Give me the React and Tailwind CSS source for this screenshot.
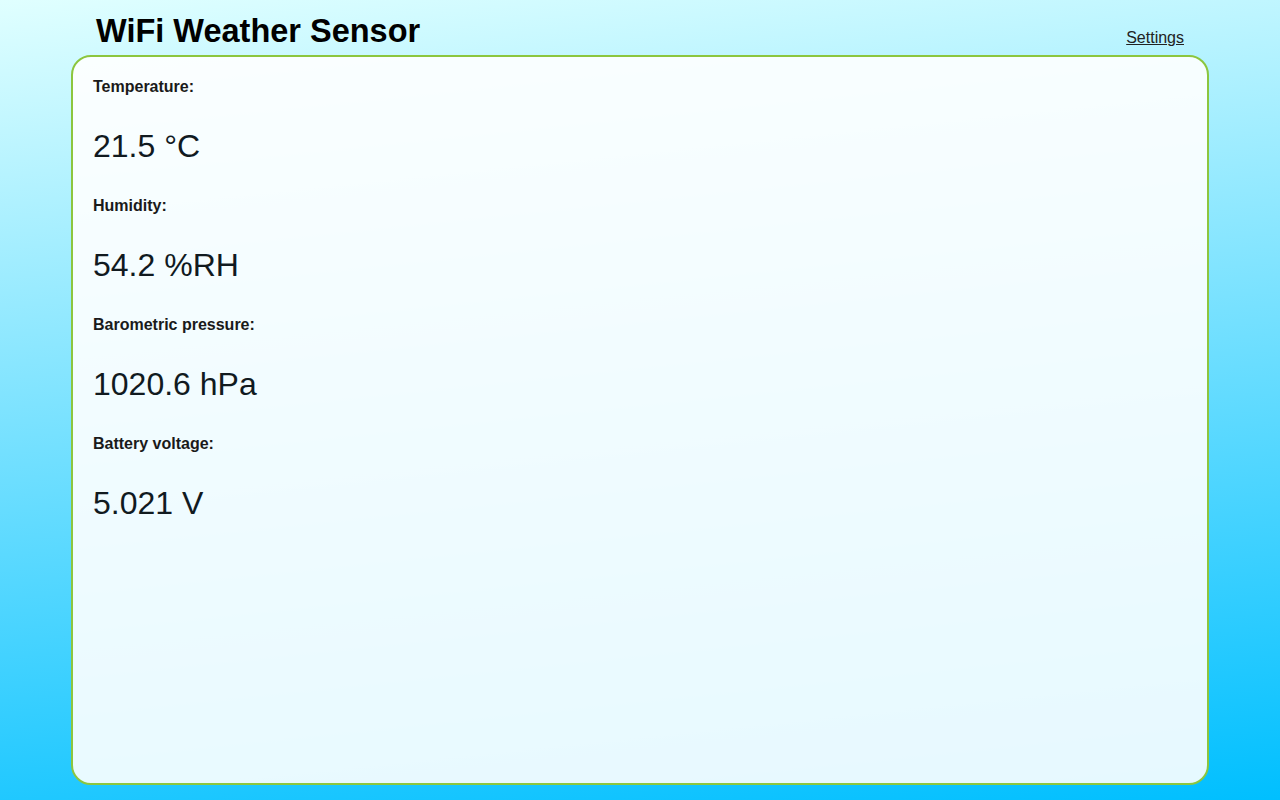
import React from "react";

const readings = [
  { label: "Temperature:", value: "21.5 °C" },
  { label: "Humidity:", value: "54.2 %RH" },
  { label: "Barometric pressure:", value: "1020.6 hPa" },
  { label: "Battery voltage:", value: "5.021 V" },
];

export default function App() {
  return (
    <div className="min-h-[800px] bg-[linear-gradient(174deg,#e0ffff,#00bfff)] font-['Liberation_Sans',Arial,sans-serif] text-[#111]">
      <div className="w-[1138px] mx-auto pt-[13px]">
        <header className="flex items-baseline justify-between px-[25px] mb-[6px]">
          <h1 className="text-[32.5px] leading-[36px] font-bold text-black">WiFi Weather Sensor</h1>
          <a href="#" className="relative top-[1px] text-[16px] leading-[20px] text-[#222] underline">Settings</a>
        </header>

        <main className="h-[730px] rounded-[20px] border-2 border-[#8cc63f] bg-white/90 px-[20px] pt-[20px]">
          {readings.map((r) => (
            <div key={r.label} className="mb-[32px]">
              <div className="text-[16px] leading-[20px] font-bold text-[#1a1a1a]">{r.label}</div>
              <div className="mt-[31px] text-[32px] leading-[36px] text-[#111a1f]">{r.value}</div>
            </div>
          ))}
        </main>
      </div>
    </div>
  );
}
